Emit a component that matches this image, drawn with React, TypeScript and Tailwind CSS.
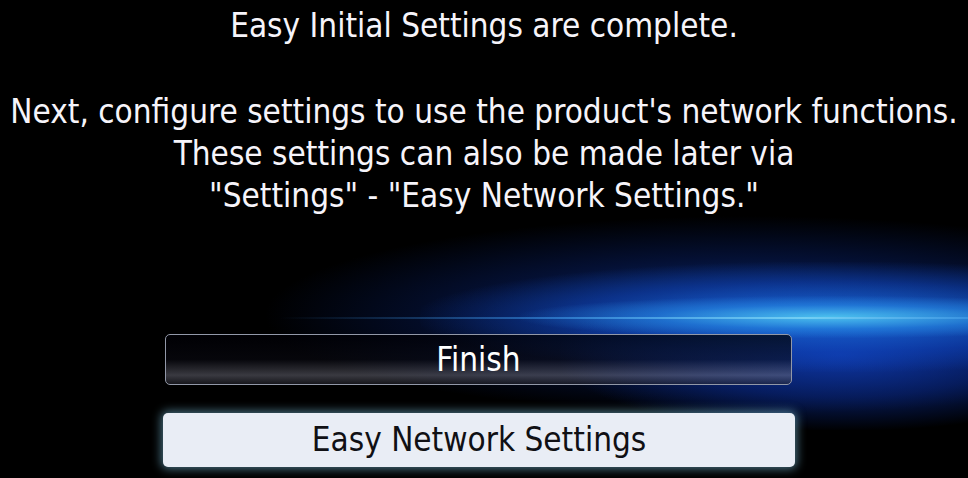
import React from 'react'

const font = { fontFamily: '"DejaVu Sans Condensed", "DejaVu Sans", sans-serif' }

const App: React.FC = () => {
  return (
    <div
      className="relative w-[968px] h-[478px] overflow-hidden bg-black text-[#f6f4fa]"
      style={font}
    >
      {/* background glow */}
      <div className="absolute left-[260px] top-[215px] w-[980px] h-[200px] rounded-full bg-[radial-gradient(ellipse_at_center,rgba(18,70,190,0.7)_0%,rgba(10,40,130,0.4)_40%,rgba(0,0,0,0)_70%)]" />
      <div className="absolute left-[560px] top-[280px] w-[560px] h-[150px] rounded-full bg-[radial-gradient(ellipse_at_center,rgba(15,60,180,0.85)_0%,rgba(10,45,150,0.55)_40%,rgba(0,0,0,0)_72%)]" />
      <div className="absolute left-[420px] top-[262px] w-[820px] h-[110px] rounded-full bg-[radial-gradient(ellipse_at_center,rgba(30,120,230,0.8)_0%,rgba(15,70,190,0.5)_45%,rgba(0,0,0,0)_72%)]" />
      <div className="absolute left-[520px] top-[296px] w-[620px] h-[42px] rounded-full bg-[radial-gradient(ellipse_at_center,rgba(80,200,240,0.9)_0%,rgba(40,140,230,0.55)_40%,rgba(0,0,0,0)_72%)]" />
      <div className="absolute left-[280px] top-[317px] w-[700px] h-[2px] bg-[linear-gradient(to_right,rgba(0,0,0,0),rgba(60,150,230,0.6)_40%,rgba(120,210,245,0.9)_75%,rgba(60,150,230,0.7))]" />

      <div className="relative flex flex-col items-center">
        <div className="mt-[5px] text-[33px] leading-[42px]">Easy Initial Settings are complete.</div>
        <div className="mt-[44px] flex flex-col items-center text-[33px] leading-[42px]">
          <div>Next, configure settings to use the product's network functions.</div>
          <div>These settings can also be made later via</div>
          <div>"Settings" - "Easy Network Settings."</div>
        </div>

        <div className="mt-[117px] self-start ml-[163px] flex flex-col gap-[28px]">
          <div className="w-[627px] h-[51px] ml-[2px] flex items-center justify-center rounded-[5px] border-[1.5px] border-[#9298a8] bg-[linear-gradient(to_bottom,rgba(0,0,5,0.75)_0%,rgba(10,10,18,0.6)_50%,rgba(105,105,118,0.55)_82%,rgba(40,40,50,0.55)_100%)] text-[33px] text-white">
            Finish
          </div>
          <div className="w-[632px] h-[54px] flex items-center justify-center rounded-[5px] bg-[#e9edf5] text-[33px] text-[#101014] shadow-[0_0_10px_2px_rgba(130,200,230,0.55)]">
            Easy Network Settings
          </div>
        </div>
      </div>
    </div>
  )
}

export default App
